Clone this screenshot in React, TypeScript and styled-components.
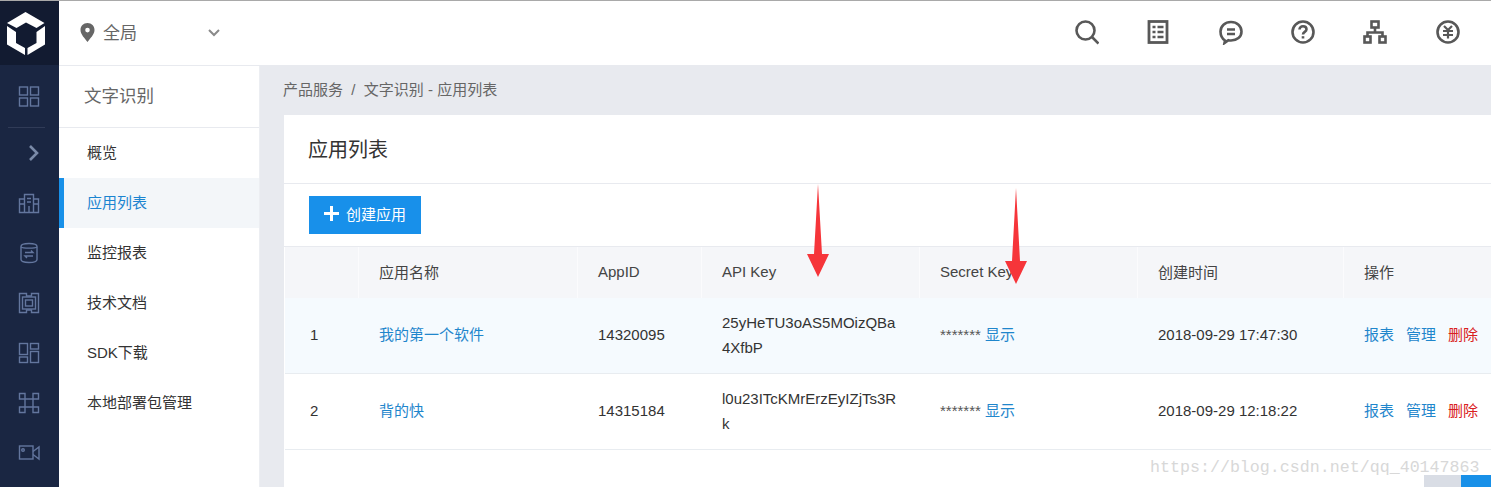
import React from "react";
import styled, { createGlobalStyle } from "styled-components";

const GlobalStyle = createGlobalStyle`
  html, body {
    margin: 0;
    padding: 0;
    height: 100%;
    overflow: hidden;
    background: #fff;
  }
  * {
    box-sizing: border-box;
  }
  body {
    font-family: "Liberation Sans", "Noto Sans CJK SC", sans-serif;
    font-size: 15px;
    color: #333;
  }
`;

const Page = styled.div`
  display: flex;
  width: 1491px;
  height: 487px;
  border-top: 1px solid #a9a9a9;
  overflow: hidden;
  position: relative;
`;

const Rail = styled.aside`
  width: 59px;
  flex: none;
  background: #1a2642;
  display: flex;
  flex-direction: column;
`;

const RailLogo = styled.div`
  height: 64px;
  background: #121b31;
  display: flex;
  align-items: center;
  justify-content: center;
  margin-bottom: 6px;
`;

const RailItem = styled.div`
  height: 50px;
  display: flex;
  align-items: center;
  justify-content: center;
  flex: none;
  padding-right: 2px;
`;

const RailDivider = styled.div`
  height: 1px;
  margin: 6px 14px 0 8px;
  background: #303b57;
  flex: none;
`;

const Content = styled.div`
  flex: 1;
  min-width: 0;
  display: flex;
  flex-direction: column;
`;

const TopBar = styled.header`
  height: 65px;
  flex: none;
  display: flex;
  align-items: center;
  justify-content: space-between;
  padding-right: 7px;
  border-bottom: 1px solid #e8eaef;
`;

const RegionPicker = styled.div`
  width: 200px;
  display: flex;
  align-items: center;
  padding-left: 21px;
  color: #666;
  font-size: 17px;
  margin-top: -1px;
`;

const RegionName = styled.span`
  margin-left: 8px;
  margin-top: -2px;
  flex: 1;
`;

const RegionChevron = styled.span`
  display: flex;
  margin-right: 38px;
`;

const TopIcons = styled.div`
  display: flex;
`;

const TopIcon = styled.div`
  width: 72.4px;
  height: 40px;
  display: flex;
  align-items: center;
  justify-content: center;
  margin-top: -2px;
`;

const Body = styled.div`
  flex: 1;
  min-height: 0;
  display: flex;
`;

const SideNav = styled.nav`
  width: 201px;
  flex: none;
  border-right: 1px solid #eceef2;
  background: #fff;
`;

const SideTitle = styled.div`
  height: 62px;
  padding: 0 0 5px 25px;
  display: flex;
  align-items: center;
  font-size: 17.500px;
  color: #666;
  border-bottom: 1px solid #e8eaef;
`;

const SideItem = styled.div<{ $active?: boolean }>`
  height: 50px;
  display: flex;
  align-items: center;
  padding: 0 0 3px 23px;
  border-left: 5px solid ${(p) => (p.$active ? "#1890e8" : "transparent")};
  background: ${(p) => (p.$active ? "#f3f6f9" : "transparent")};
  color: ${(p) => (p.$active ? "#1b84d0" : "#333")};
`;

const Main = styled.main`
  flex: 1;
  min-width: 0;
  background: #e8eaef;
  padding-left: 24px;
`;

const Breadcrumb = styled.div`
  height: 49px;
  margin-left: -1px;
  padding-bottom: 4px;
  display: flex;
  align-items: center;
  color: #666;
`;

const Crumb = styled.span`
  white-space: pre;
`;

const Card = styled.section`
  background: #fff;
  height: 400px;
  display: flex;
  flex-direction: column;
`;

const CardTitle = styled.h2`
  margin: 0;
  height: 69px;
  padding: 0 0 1px 24px;
  display: flex;
  align-items: center;
  font-size: 20px;
  font-weight: 400;
  color: #333;
  border-bottom: 1px solid #e8eaef;
  flex: none;
`;

const Toolbar = styled.div`
  height: 63px;
  flex: none;
  padding: 12px 0 0 25px;
  border-bottom: 1px solid #e8eaef;
`;

const CreateButton = styled.button`
  width: 112px;
  height: 38px;
  padding: 0 0 3px 15px;
  border: 0;
  background: #1890ea;
  color: #fff;
  font: inherit;
  display: flex;
  align-items: center;
  gap: 7px;
`;

const Table = styled.div`
  flex: none;
  margin-left: 1px;
`;

const COLUMNS = "74px 219px 124px 218px 218px 206px 1fr";

const HeadRow = styled.div`
  display: grid;
  grid-template-columns: ${COLUMNS};
  height: 51px;
  background: #f5f6f9;
  align-items: stretch;
`;

const HeadCell = styled.div`
  display: flex;
  align-items: center;
  padding: 0 0 3px 20px;
  border-right: 1px solid #fbfbfd;
  color: #444;
  &:last-child {
    border-right: 0;
  }
`;

const BodyRow = styled.div<{ $tinted?: boolean }>`
  display: grid;
  grid-template-columns: ${COLUMNS};
  height: 76px;
  background: ${(p) => (p.$tinted ? "#f5fafe" : "#fff")};
  border-bottom: 1px solid #e8ecf0;
`;

const Cell = styled.div`
  display: flex;
  align-items: center;
  padding: 0 20px 3px;
  color: #333;
  line-height: 25px;
`;

const IndexCell = styled(Cell)`
  padding-left: 25px;
`;

const KeyCell = styled(Cell)`
  padding-bottom: 1px;
  word-break: break-all;
`;

const Stars = styled.span`
  margin-right: 4px;
  color: #555;
`;

const Link = styled.a<{ $danger?: boolean }>`
  color: ${(p) => (p.$danger ? "#d92020" : "#1f86cc")};
  white-space: nowrap;
  & + & {
    margin-left: 12px;
  }
`;

const Pager = styled.div`
  display: flex;
  justify-content: flex-end;
  margin-top: 25px;
`;

const PagerCell = styled.div<{ $current?: boolean }>`
  height: 30px;
  width: ${(p) => (p.$current ? "30px" : "37px")};
  background: ${(p) => (p.$current ? "#1890e8" : "#d9dde5")};
`;

const Watermark = styled.div`
  position: absolute;
  left: 1150px;
  top: 457px;
  font-family: "Liberation Mono", monospace;
  font-size: 16.650px;
  line-height: 20px;
  color: #d8d8d8;
  white-space: nowrap;
`;

const Arrow = styled.svg<{ $x: number; $y: number }>`
  position: absolute;
  left: ${(p) => p.$x}px;
  top: ${(p) => p.$y}px;
`;

const railStroke = {
  fill: "none",
  stroke: "#63769e",
  strokeWidth: 1.4,
};

const topStroke = {
  fill: "none",
  stroke: "#585858",
  strokeWidth: 2.6,
};

const RailIcon = ({ children }: { children: React.ReactNode }) => (
  <svg width="22" height="22" viewBox="0 0 22 22" {...railStroke}>
    {children}
  </svg>
);

const TopSvg = ({ children }: { children: React.ReactNode }) => (
  <svg width="26" height="26" viewBox="0 0 26 26" {...topStroke}>
    {children}
  </svg>
);

const railIcons = [
  <RailIcon key="a">
    <rect x="1.500" y="2" width="8" height="8" />
    <rect x="12.500" y="2" width="8" height="8" />
    <rect x="1.500" y="13" width="8" height="8" />
    <rect x="12.500" y="13" width="8" height="8" />
  </RailIcon>,
  <svg key="b" width="22" height="22" viewBox="0 0 22 22" fill="none" stroke="#7a8aa8" strokeWidth="2.600" style={{ marginLeft: 9 }}>
    <path d="M8 4l7 7-7 7" />
  </svg>,
  <RailIcon key="c">
    <path d="M6.500 20.500V2.500h9v18M6.500 7H1.500v13.500h19V7h-5" />
    <path d="M9 6.500h4M9 10h4M1.500 12h5M15.500 12h5" />
    <path d="M11 14v6.500" />
  </RailIcon>,
  <RailIcon key="d">
    <path d="M3 4.500C3 2.500 6 1.500 11 1.500s8 1 8 3v13c0 2-3 3-8 3s-8-1-8-3z" />
    <path d="M3 5c2 1.500 14 1.500 16 0" />
    <path d="M7 10.500h8l-2-2M15 14H7l2 2" />
  </RailIcon>,
  <RailIcon key="e">
    <path d="M1.500 1.500h7v2.500h5V1.500h7v19h-7V18h-5v2.500h-7z" />
    <rect x="4.500" y="5" width="13" height="12" />
    <rect x="7.500" y="8" width="7" height="6" />
  </RailIcon>,
  <RailIcon key="f">
    <rect x="1.500" y="1.500" width="8" height="11" />
    <rect x="1.500" y="15" width="8" height="5.500" />
    <rect x="12.500" y="1.500" width="8" height="5.500" />
    <rect x="12.500" y="9.500" width="8" height="11" />
  </RailIcon>,
  <RailIcon key="g">
    <path d="M7 7H1.500V1.500H7V20.500H1.500V15H20.500V20.500H15V1.500H20.500V7H1.500" />
  </RailIcon>,
  <RailIcon key="h">
    <rect x="1.500" y="4" width="13.500" height="13" />
    <circle cx="5" cy="8" r="1.300" />
    <path d="M15 9.500l6-4.500v12l-6-4.500" />
  </RailIcon>,
];

const sideItems = ["概览", "应用列表", "监控报表", "技术文档", "SDK下载", "本地部署包管理"];

const apps = [
  { id: 1, name: "我的第一个软件", appId: "14320095", apiKey: "25yHeTU3oAS5MOizQBa4XfbP", created: "2018-09-29 17:47:30" },
  { id: 2, name: "背的快", appId: "14315184", apiKey: "l0u23ITcKMrErzEyIZjTs3Rk", created: "2018-09-29 12:18:22" },
];

const RedArrow = ({ x, y, h }: { x: number; y: number; h: number }) => (
  <Arrow $x={x} $y={y} width="24" height={h} viewBox={`0 0 24 ${h}`}>
    <path
      d={`M12 0L16 ${h - 23}L23 ${h - 23}L12 ${h}L1 ${h - 23}L8 ${h - 23}Z`}
      fill="#f6353a"
    />
  </Arrow>
);

export default function App() {
  return (
    <>
      <GlobalStyle />
      <Page>
        <Rail>
          <RailLogo>
            <svg width="59" height="64" viewBox="0 0 59 64" fill="#fff" style={{ flex: "none" }}>
              <path d="M25.500 11L44.500 22L36.500 27L26 21.500L16.500 27L7 22Z" />
              <path d="M7 25L16 31V42L25 47V54L7 43.500Z" />
              <path d="M45 25L36.500 31V42L27.500 47V54L45 43.500Z" />
            </svg>
          </RailLogo>
          <RailItem>{railIcons[0]}</RailItem>
          <RailDivider />
          {railIcons.slice(1).map((icon, i) => (
            <RailItem key={i}>{icon}</RailItem>
          ))}
        </Rail>
        <Content>
          <TopBar>
            <RegionPicker>
              <svg width="15" height="19" viewBox="0 0 15 19">
                <path
                  fillRule="evenodd"
                  d="M7.500 0C3.400 0 .5 3 .5 7c0 4.500 4.500 8.500 7 12 2.500-3.500 7-7.500 7-12 0-4-2.900-7-7-7zm0 4.800a2.300 2.300 0 1 1 0 4.600 2.300 2.300 0 0 1 0-4.600z"
                  fill="#666"
                />
              </svg>
              <RegionName>全局</RegionName>
              <RegionChevron>
                <svg width="14" height="10" viewBox="0 0 14 10" fill="none" stroke="#8a8a8a" strokeWidth="2">
                  <path d="M2 2l5 5 5-5" />
                </svg>
              </RegionChevron>
            </RegionPicker>
            <TopIcons>
              <TopIcon>
                <TopSvg>
                  <circle cx="12.500" cy="11.500" r="9" />
                  <path d="M19 18l6.500 6.500" />
                </TopSvg>
              </TopIcon>
              <TopIcon>
                <TopSvg>
                  <rect x="4" y="2.500" width="18" height="21" strokeWidth="2.800" />
                  <path d="M7.500 8h3M12.500 8h6M7.500 13h3M12.500 13h6M7.500 18h3M12.500 18h6" strokeWidth="2.400" />
                </TopSvg>
              </TopIcon>
              <TopIcon>
                <TopSvg>
                  <path d="M7 21.500C4 19.500 2.500 16.500 2.500 12.500 2.500 7 7 3 13 3s10.500 4 10.500 9.500S19 21.500 13 21.500c-1 0-1.800-.1-2.600-.3L6.500 24z" />
                  <path d="M9 10.500h8M9 15h8" />
                </TopSvg>
              </TopIcon>
              <TopIcon>
                <TopSvg>
                  <circle cx="13" cy="13" r="10.500" />
                  <path d="M9.500 10.500c0-2 1.500-3.200 3.500-3.200s3.500 1.200 3.500 3c0 2.700-3.500 2.500-3.500 5.200" />
                  <path d="M13 17.200v2.300" />
                </TopSvg>
              </TopIcon>
              <TopIcon>
                <TopSvg>
                  <rect x="9.500" y="2.500" width="7" height="6" />
                  <path d="M13 8.500v5M5.500 18v-4.500h15V18" />
                  <rect x="2.500" y="17.500" width="6" height="6" />
                  <rect x="17.500" y="17.500" width="6" height="6" />
                </TopSvg>
              </TopIcon>
              <TopIcon>
                <TopSvg>
                  <circle cx="13" cy="13" r="10.500" />
                  <path d="M9 7l4 4 4-4M8 12h10M8 16h10M13 11v8.500" strokeWidth="2.200" />
                </TopSvg>
              </TopIcon>
            </TopIcons>
          </TopBar>
          <Body>
            <SideNav>
              <SideTitle>文字识别</SideTitle>
              {sideItems.map((item) => (
                <SideItem key={item} $active={item === "应用列表"}>
                  {item}
                </SideItem>
              ))}
            </SideNav>
            <Main>
              <Breadcrumb>
                <Crumb>产品服务  /  文字识别 - 应用列表</Crumb>
              </Breadcrumb>
              <Card>
                <CardTitle>应用列表</CardTitle>
                <Toolbar>
                  <CreateButton>
                    <svg width="15" height="15" viewBox="0 0 15 15" fill="none" stroke="#fff" strokeWidth="3">
                      <path d="M7.500 0v15M0 7.500h15" />
                    </svg>
                    创建应用
                  </CreateButton>
                </Toolbar>
                <Table>
                  <HeadRow>
                    <HeadCell />
                    <HeadCell>应用名称</HeadCell>
                    <HeadCell>AppID</HeadCell>
                    <HeadCell>API Key</HeadCell>
                    <HeadCell>Secret Key</HeadCell>
                    <HeadCell>创建时间</HeadCell>
                    <HeadCell>操作</HeadCell>
                  </HeadRow>
                  {apps.map((app, i) => (
                    <BodyRow key={app.id} $tinted={i === 0}>
                      <IndexCell>{app.id}</IndexCell>
                      <Cell>
                        <Link>{app.name}</Link>
                      </Cell>
                      <Cell>{app.appId}</Cell>
                      <KeyCell>
                        <span>{app.apiKey}</span>
                      </KeyCell>
                      <Cell>
                        <Stars>*******</Stars>
                        <Link>显示</Link>
                      </Cell>
                      <Cell>{app.created}</Cell>
                      <Cell>
                        <Link>报表</Link>
                        <Link>管理</Link>
                        <Link $danger>删除</Link>
                      </Cell>
                    </BodyRow>
                  ))}
                </Table>
                <Pager>
                  <PagerCell />
                  <PagerCell $current />
                </Pager>
              </Card>
            </Main>
          </Body>
        </Content>
        <RedArrow x={806} y={183} h={93} />
        <RedArrow x={1004} y={187} h={96} />
        <Watermark>https://blog.csdn.net/qq_40147863</Watermark>
      </Page>
    </>
  );
}
